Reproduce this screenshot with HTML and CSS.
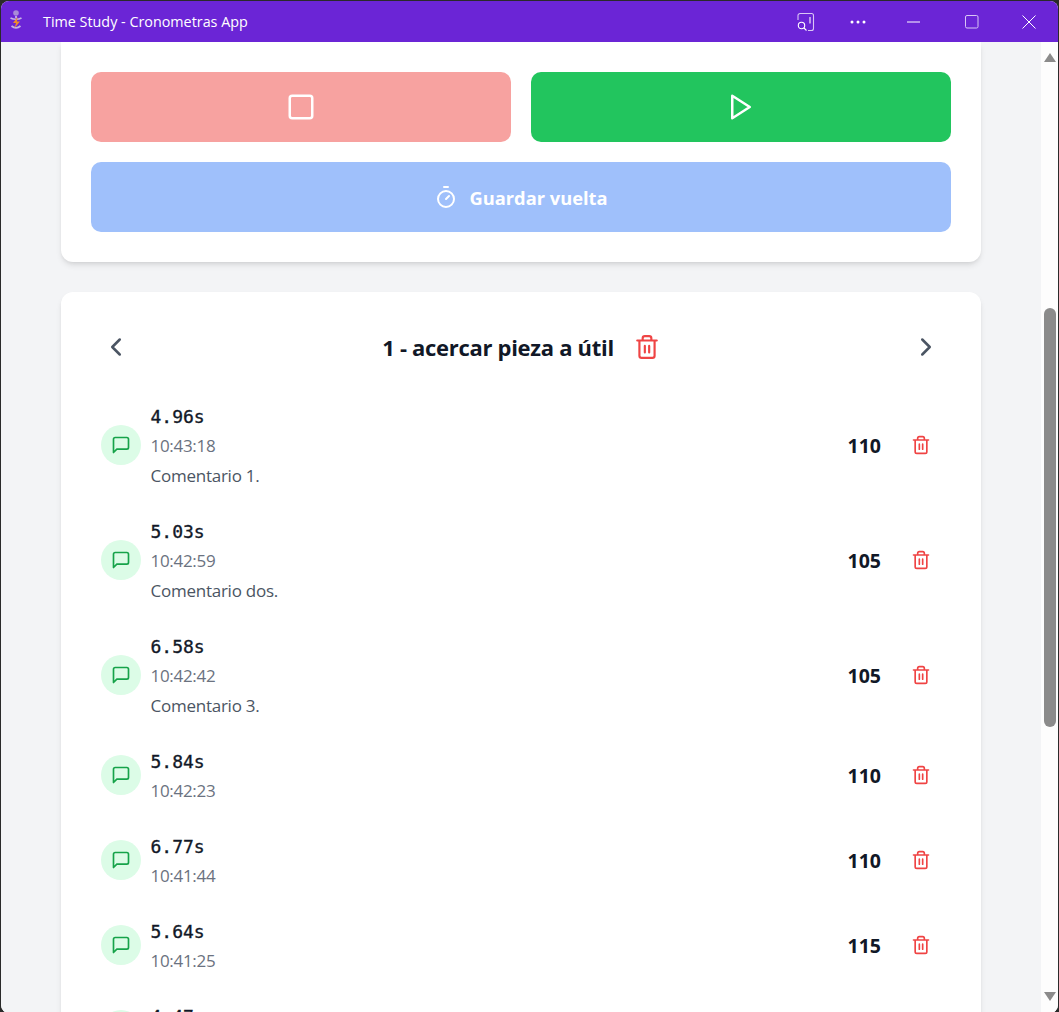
FILE: index.html
```html
<!DOCTYPE html>
<html lang="es">
<head>
<meta charset="utf-8">
<title>Time Study - Cronometras App</title>
<link rel="stylesheet" href="styles.css">
</head>
<body>
<svg class="defs" width="0" height="0" aria-hidden="true">
  <symbol id="trash" viewBox="0 0 24 24"><path d="M3 6h18M19 6v14a2 2 0 0 1-2 2H7a2 2 0 0 1-2-2V6M8 6V4a2 2 0 0 1 2-2h4a2 2 0 0 1 2 2v2M10 11v6M14 11v6"/></symbol>
  <symbol id="msg" viewBox="0 0 24 24"><path d="M21 15a2 2 0 0 1-2 2H7l-4 4V5a2 2 0 0 1 2-2h14a2 2 0 0 1 2 2z"/></symbol>
</svg>
<div class="window">
  <header class="titlebar">
    <svg class="app-icon" viewBox="0 0 20 22" width="20" height="22"><circle cx="10" cy="4" r="2.800" fill="#a98bd8"/><path d="M4.500 9c3 1.500 8 1.500 11 0M5.500 17c3 2.500 6 2.500 9 0M10 7v2" fill="none" stroke="#c4b2e6" stroke-width="1.800"/><path d="M11.500 8 7 14h3l-1.500 5L14 12.500h-3z" fill="#ef8b2c"/></svg>
    <span class="app-title">Time Study - Cronometras App</span>
    <div class="win-controls">
      <span class="win-btn wb-cast"><svg viewBox="0 0 20 20" width="20" height="20"><path d="M2 8V3.500A2 2 0 0 1 4 1.500h11.500a2 2 0 0 1 2 2v13a2 2 0 0 1-2 2H12" fill="none" stroke="#d9c6f5" stroke-width="1.100"/><path d="M14 5v6.500" stroke="#fff" stroke-width="1.100"/><circle cx="5.500" cy="13.500" r="3.200" fill="none" stroke="#fff" stroke-width="1.100"/><path d="m8 16 2.500 2.500" stroke="#fff" stroke-width="1.100"/></svg></span>
      <span class="win-btn wb-more"><svg viewBox="0 0 20 6" width="20" height="6"><circle cx="3" cy="3" r="1.500" fill="#fff"/><circle cx="9" cy="3" r="1.500" fill="#fff"/><circle cx="15" cy="3" r="1.500" fill="#fff"/></svg></span>
      <span class="win-btn wb-min"><svg viewBox="0 0 14 14" width="14" height="14"><path d="M0 7h13" stroke="#fff" stroke-width="1"/></svg></span>
      <span class="win-btn wb-max"><svg viewBox="0 0 14 14" width="14" height="14"><rect x=".5" y=".5" width="12.500" height="12.500" rx="1.500" fill="none" stroke="#d9c6f5" stroke-width="1"/></svg></span>
      <span class="win-btn wb-close"><svg viewBox="0 0 14 14" width="14" height="14"><path d="m.5.500 13 13M13.500.500l-13 13" stroke="#fff" stroke-width="1"/></svg></span>
    </div>
  </header>
  <div class="viewport">
    <main class="main">
      <section class="card card-controls">
        <div class="btn-pair">
          <button class="btn btn-stop"><svg class="ic30" viewBox="0 0 24 24"><rect x="3" y="3" width="18" height="18" rx="2"/></svg></button>
          <button class="btn btn-play"><svg class="ic30" viewBox="0 0 24 24"><path d="m5 3 14 9-14 9z"/></svg></button>
        </div>
        <button class="btn btn-lap">
          <svg class="ic24" viewBox="0 0 24 24"><path d="M10 2h4M12 14l3-3"/><circle cx="12" cy="14" r="8"/></svg>
          <span>Guardar vuelta</span>
        </button>
      </section>
      <section class="card card-laps">
        <div class="lap-nav">
          <svg class="chev" viewBox="0 0 24 24"><path d="m15 18-6-6 6-6"/></svg>
          <div class="lap-heading">
            <h2>1 - acercar pieza a útil</h2>
            <svg class="trash-lg"><use href="#trash"/></svg>
          </div>
          <svg class="chev" viewBox="0 0 24 24"><path d="m9 18 6-6-6-6"/></svg>
        </div>
        <ul class="laps">
          <li class="lap"><span class="bubble"><svg class="ic-msg"><use href="#msg"/></svg></span><div class="lap-text"><div class="lap-time">4.96s</div><div class="lap-clock">10:43:18</div><div class="lap-note">Comentario 1.</div></div><b class="lap-num">110</b><svg class="trash-sm"><use href="#trash"/></svg></li>
          <li class="lap"><span class="bubble"><svg class="ic-msg"><use href="#msg"/></svg></span><div class="lap-text"><div class="lap-time">5.03s</div><div class="lap-clock">10:42:59</div><div class="lap-note">Comentario dos.</div></div><b class="lap-num">105</b><svg class="trash-sm"><use href="#trash"/></svg></li>
          <li class="lap"><span class="bubble"><svg class="ic-msg"><use href="#msg"/></svg></span><div class="lap-text"><div class="lap-time">6.58s</div><div class="lap-clock">10:42:42</div><div class="lap-note">Comentario 3.</div></div><b class="lap-num">105</b><svg class="trash-sm"><use href="#trash"/></svg></li>
          <li class="lap"><span class="bubble"><svg class="ic-msg"><use href="#msg"/></svg></span><div class="lap-text"><div class="lap-time">5.84s</div><div class="lap-clock">10:42:23</div></div><b class="lap-num">110</b><svg class="trash-sm"><use href="#trash"/></svg></li>
          <li class="lap"><span class="bubble"><svg class="ic-msg"><use href="#msg"/></svg></span><div class="lap-text"><div class="lap-time">6.77s</div><div class="lap-clock">10:41:44</div></div><b class="lap-num">110</b><svg class="trash-sm"><use href="#trash"/></svg></li>
          <li class="lap"><span class="bubble"><svg class="ic-msg"><use href="#msg"/></svg></span><div class="lap-text"><div class="lap-time">5.64s</div><div class="lap-clock">10:41:25</div></div><b class="lap-num">115</b><svg class="trash-sm"><use href="#trash"/></svg></li>
          <li class="lap"><span class="bubble"><svg class="ic-msg"><use href="#msg"/></svg></span><div class="lap-text"><div class="lap-time">4.47s</div><div class="lap-clock">10:41:06</div></div><b class="lap-num">110</b><svg class="trash-sm"><use href="#trash"/></svg></li>
        </ul>
      </section>
    </main>
    <aside class="scrollbar">
      <span class="arrow arrow-up"></span>
      <div class="track"><span class="thumb"></span></div>
      <span class="arrow arrow-down"></span>
    </aside>
  </div>
</div>
</body>
</html>
```
FILE: styles.css
```css
* { box-sizing: border-box; }
html, body { margin: 0; height: 100%; background: #2a2a2a; overflow: hidden; }
body { font-family: "Open Sans", "Noto Sans", "Liberation Sans", sans-serif; color: #111827; }
.defs { display: block; height: 0; }
.window { height: 1012px; margin: 1px 1px 0 1px; display: flex; flex-direction: column; border-radius: 8px; overflow: hidden; background: #fff; }
.titlebar { flex: 0 0 41px; background: #6b25d6; color: #fff; display: flex; align-items: center; padding-left: 5px; }
.app-icon { flex: none; margin-bottom: 3px; }
.app-title { margin-left: 17px; font-size: 14.350px; }
.win-controls { margin-left: auto; display: flex; align-items: center; }
.win-btn { display: flex; justify-content: center; align-items: center; height: 41px; }
.wb-cast { width: 56px; }
.wb-more { width: 50px; }
.wb-min { width: 60px; }
.wb-max { width: 56px; }
.wb-close { width: 58px; }
.win-btn svg { display: block; }

.viewport { flex: 1; display: flex; min-height: 0; }
.main { flex: 1; min-width: 0; background: #f3f4f6; padding: 0 60px; overflow: hidden; display: flex; flex-direction: column; gap: 30px; }
.scrollbar { flex: 0 0 17px; background: #fdfdfd; display: flex; flex-direction: column; align-items: center; padding: 11px 0 0 0; }
.arrow { width: 0; height: 0; border-left: 6.500px solid transparent; border-right: 6.500px solid transparent; flex: none; }
.arrow-up { border-bottom: 9px solid #8b8b8b; }
.arrow-down { border-top: 9px solid #8b8b8b; }
.track { height: 930px; width: 100%; display: flex; justify-content: center; padding-top: 246px; flex: none; }
.thumb { width: 12px; height: 419px; background: #8b8b8b; border-radius: 6px; display: block; }

.card { flex: none; background: #fff; border-radius: 12px; box-shadow: 0 4px 6px -1px rgba(0,0,0,.1), 0 2px 4px -2px rgba(0,0,0,.1); padding: 30px; }
.card-controls { border-radius: 0 0 12px 12px; display: flex; flex-direction: column; gap: 20px; height: 220px; }
.btn-pair { display: flex; gap: 20px; }
.btn { border: 0; border-radius: 10px; height: 70px; color: #fff; display: flex; align-items: center; justify-content: center; font: inherit; padding: 0; }
.btn-stop { flex: 1; background: #f7a2a0; }
.btn-play { flex: 1; background: #22c55e; }
.btn-lap { background: #9fc0fb; gap: 11px; font-size: 18.300px; font-weight: 700; }
.ic30 { width: 30px; height: 30px; fill: none; stroke: #fff; stroke-width: 2; stroke-linejoin: round; }
.ic24 { width: 24px; height: 24px; fill: none; stroke: #fff; stroke-width: 2; stroke-linecap: round; }

.card-laps { padding: 35px 30px 0; }
.lap-nav { display: flex; align-items: center; justify-content: space-between; height: 40px; padding: 0 10px; }
.chev { width: 30px; height: 30px; fill: none; stroke: #4b5563; stroke-width: 2; stroke-linecap: round; stroke-linejoin: round; }
.lap-heading { display: flex; align-items: center; gap: 20px; }
.lap-heading h2 { margin: 0; font-size: 22px; line-height: 32px; font-weight: 700; color: #111827; letter-spacing: -.3px; }
.trash-lg { width: 26px; height: 26px; fill: none; stroke: #ef4444; stroke-width: 2; stroke-linecap: round; stroke-linejoin: round; }

.laps { list-style: none; margin: 21.500px 0 0; padding: 0; }
.lap { display: flex; align-items: center; padding: 12.500px 20px 12.500px 10px; }
.bubble { width: 40px; height: 40px; border-radius: 50%; background: #dcfce7; display: flex; align-items: center; justify-content: center; flex: none; margin-bottom: 2px; }
.ic-msg { width: 20px; height: 20px; fill: none; stroke: #16a34a; stroke-width: 2; stroke-linejoin: round; }
.lap-text { flex: 1; margin-left: 10px; }
.lap-time { font-family: "DejaVu Sans Mono", "Liberation Mono", monospace; font-size: 18px; line-height: 32px; font-weight: 400; -webkit-text-stroke: .35px #111827; color: #111827; margin-left: -.5px; }
.lap-clock { font-size: 17px; line-height: 26px; margin-bottom: 2px; color: #6b7280; letter-spacing: -.3px; margin-left: -.5px; }
.lap-note { font-size: 17px; line-height: 30px; color: #4b5563; letter-spacing: -.25px; margin-left: -.5px; }
.lap-num { font-size: 19.500px; font-weight: 700; color: #111827; margin-right: 30px; margin-bottom: 2px; }
.trash-sm { width: 20px; height: 20px; fill: none; stroke: #ef4444; stroke-width: 2; stroke-linecap: round; stroke-linejoin: round; flex: none; margin-bottom: 2px; }
```
